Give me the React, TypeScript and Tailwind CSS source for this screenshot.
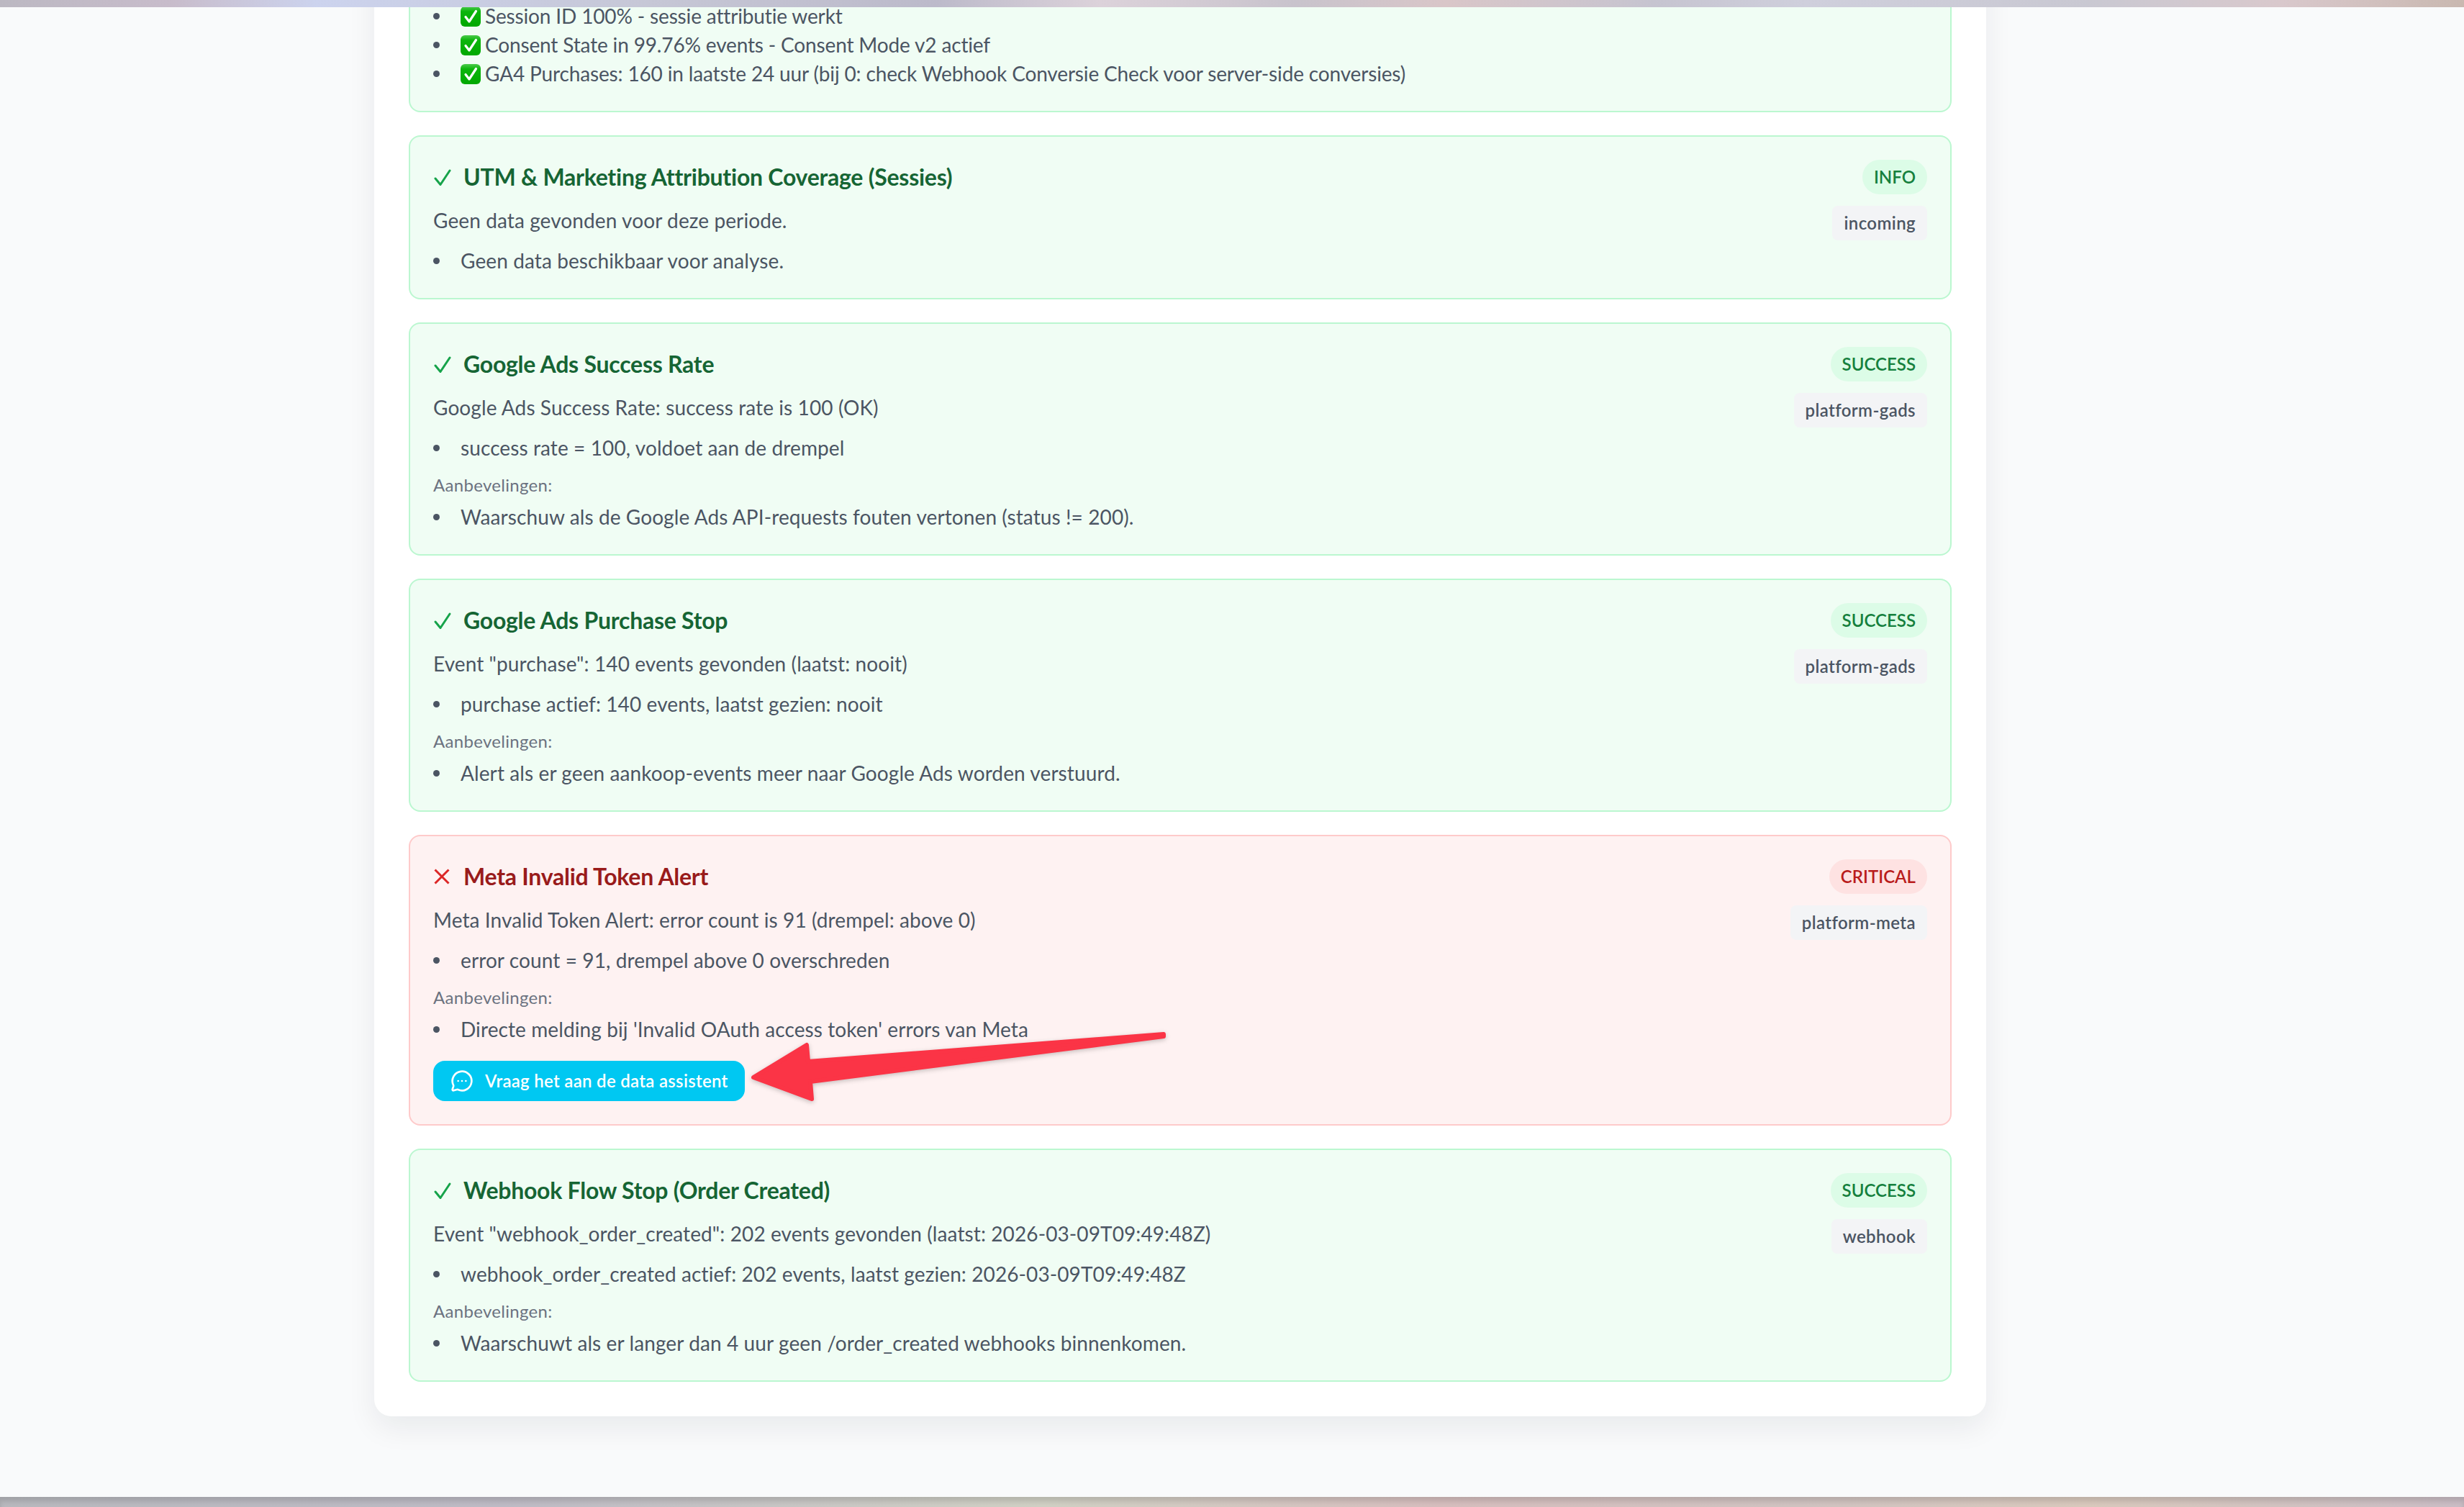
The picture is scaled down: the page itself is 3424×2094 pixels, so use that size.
import type { ReactNode } from 'react';
import { MessageCircleMore } from 'lucide-react';

type Tone = 'green' | 'red';

interface Alert {
  tone: Tone;
  title: string;
  summary: string;
  details: string[];
  badge: string;
  tag: string;
  advice?: string;
  ask?: boolean;
}

const alerts: Alert[] = [
  {
    tone: 'green',
    title: 'UTM & Marketing Attribution Coverage (Sessies)',
    summary: 'Geen data gevonden voor deze periode.',
    details: ['Geen data beschikbaar voor analyse.'],
    badge: 'INFO',
    tag: 'incoming',
  },
  {
    tone: 'green',
    title: 'Google Ads Success Rate',
    summary: 'Google Ads Success Rate: success rate is 100 (OK)',
    details: ['success rate = 100, voldoet aan de drempel'],
    badge: 'SUCCESS',
    tag: 'platform-gads',
    advice: 'Waarschuw als de Google Ads API-requests fouten vertonen (status != 200).',
  },
  {
    tone: 'green',
    title: 'Google Ads Purchase Stop',
    summary: 'Event "purchase": 140 events gevonden (laatst: nooit)',
    details: ['purchase actief: 140 events, laatst gezien: nooit'],
    badge: 'SUCCESS',
    tag: 'platform-gads',
    advice: 'Alert als er geen aankoop-events meer naar Google Ads worden verstuurd.',
  },
  {
    tone: 'red',
    title: 'Meta Invalid Token Alert',
    summary: 'Meta Invalid Token Alert: error count is 91 (drempel: above 0)',
    details: ['error count = 91, drempel above 0 overschreden'],
    badge: 'CRITICAL',
    tag: 'platform-meta',
    advice: "Directe melding bij 'Invalid OAuth access token' errors van Meta",
    ask: true,
  },
  {
    tone: 'green',
    title: 'Webhook Flow Stop (Order Created)',
    summary: 'Event "webhook_order_created": 202 events gevonden (laatst: 2026-03-09T09:49:48Z)',
    details: ['webhook_order_created actief: 202 events, laatst gezien: 2026-03-09T09:49:48Z'],
    badge: 'SUCCESS',
    tag: 'webhook',
    advice: 'Waarschuwt als er langer dan 4 uur geen /order_created webhooks binnenkomen.',
  },
];

const checks = [
  'Session ID 100% - sessie attributie werkt',
  'Consent State in 99.76% events - Consent Mode v2 actief',
  'GA4 Purchases: 160 in laatste 24 uur (bij 0: check Webhook Conversie Check voor server-side conversies)',
];

function CheckEmoji() {
  return (
    <svg viewBox="0 0 28 28" className="mr-[6px] inline-block h-[28px] w-[28px] align-[-4px]">
      <defs>
        <linearGradient id="emoji-green" x1="0" y1="0" x2="0" y2="1">
          <stop offset="0" stopColor="#4ccb4c" />
          <stop offset="0.25" stopColor="#0cb50c" />
          <stop offset="1" stopColor="#00a800" />
        </linearGradient>
      </defs>
      <rect width="28" height="28" rx="6" fill="url(#emoji-green)" />
      <path d="M7 14.5 L12 21 L21.5 6.5" fill="none" stroke="#fff" strokeWidth="3.2" strokeLinecap="round" strokeLinejoin="round" />
    </svg>
  );
}

function ToneIcon({ tone }: { tone: Tone }) {
  if (tone === 'red') {
    return (
      <svg viewBox="0 0 28 28" className="h-[28px] w-[28px] shrink-0">
        <path d="M2.5 4.5 L21.5 23.5 M21.5 4.5 L2.5 23.5" fill="none" stroke="#dc2626" strokeWidth="3" />
      </svg>
    );
  }
  return (
    <svg viewBox="0 0 28 28" className="h-[28px] w-[28px] shrink-0">
      <path d="M3 16 L10 24.5 L23 5" fill="none" stroke="#16a34a" strokeWidth="3" strokeLinecap="round" strokeLinejoin="round" />
    </svg>
  );
}

function Arrow() {
  return (
    <svg
      viewBox="1030 1425 600 115"
      className="absolute left-[460px] top-[263px] h-[115px] w-[600px] drop-shadow-[0_2px_3px_rgba(0,0,0,0.22)]"
    >
      <path
        d="M1047 1497 L1121 1452 L1123 1475 L1617 1437 L1617 1440 L1126 1503 L1128 1527 Z"
        fill="#fb3446"
        stroke="#fb3446"
        strokeWidth="6"
        strokeLinejoin="round"
      />
    </svg>
  );
}

function Item({ children }: { children: ReactNode }) {
  return (
    <li className="flex">
      <span className="flex h-[40px] w-[38px] shrink-0 items-center">
        <span className="h-[9px] w-[9px] rounded-full bg-[#4b5563]" />
      </span>
      <span>{children}</span>
    </li>
  );
}

function AlertCard({ alert }: { alert: Alert }) {
  const red = alert.tone === 'red';
  return (
    <div
      className={`relative flex justify-between rounded-[16px] border-2 p-[32px] ${
        red ? 'border-[#fecaca] bg-[#fef2f2]' : 'border-[#bbf7d0] bg-[#f0fdf4]'
      }`}
    >
      <div className="min-w-0 flex-1">
        <div className="flex h-[48px] items-center gap-[14px]">
          <ToneIcon tone={alert.tone} />
          <h3 className={`text-[32px] font-bold tracking-[-0.25px] ${red ? 'text-[#991b1b]' : 'text-[#166534]'}`}>
            {alert.title}
          </h3>
        </div>
        <p className="mt-4 text-[28px] leading-[40px] tracking-[0.1px] text-[#4b5563]">{alert.summary}</p>
        <ul className="mt-4 text-[28px] leading-[40px] tracking-[0.1px] text-[#4b5563]">
          {alert.details.map((d) => (
            <Item key={d}>{d}</Item>
          ))}
        </ul>
        {alert.advice && (
          <>
            <p className="mt-4 text-[24px] leading-[32px] tracking-[0.3px] text-[#6b7280]">Aanbevelingen:</p>
            <ul className="mt-2 text-[28px] leading-[40px] tracking-[0.1px] text-[#4b5563]">
              <Item>{alert.advice}</Item>
            </ul>
          </>
        )}
        {alert.ask && (
          <button className="mt-6 flex h-[56px] w-[433px] items-center gap-4 rounded-[16px] bg-[#00c8f2] px-6 text-[24px] font-semibold tracking-[0.3px] whitespace-nowrap text-white">
            <MessageCircleMore size={32} strokeWidth={2} className="shrink-0" />
            Vraag het aan de data assistent
          </button>
        )}
      </div>
      <div className="flex shrink-0 flex-col items-end gap-4">
        <span
          className={`flex h-[48px] items-center rounded-full px-4 text-[24px] font-semibold ${
            red ? 'bg-[#fee2e2] text-[#b91c1c]' : 'bg-[#dcfce7] text-[#15803d]'
          }`}
        >
          {alert.badge}
        </span>
        <span className="flex h-[48px] items-center rounded-[8px] bg-[#f3f4f6] px-4 text-[24px] font-semibold tracking-[0.4px] text-[#4b5563]">
          {alert.tag}
        </span>
      </div>
      {alert.ask && <Arrow />}
    </div>
  );
}

export default function App() {
  return (
    <div className="flex h-[2094px] w-[3424px] flex-col overflow-hidden bg-[#f9fafb] font-[Lato,sans-serif]">
      <div className="h-[10px] shrink-0 bg-[linear-gradient(90deg,#bcb8c2_0px,#c8bccb_240px,#ccd3ee_440px,#c6c7d6_900px,#bcbaca_1300px,#dcd2da_1530px,#c8c3cc_1800px,#d9c6c8_2010px,#c6c4d0_2300px,#cfcfdc_2510px,#c9c8d2_2900px,#d9c8cc_3170px,#c9b8b0_3424px)]" />
      <div className="flex min-h-0 flex-1 flex-col items-center justify-end overflow-hidden pr-[144px] pb-[112px]">
        <main className="flex w-[2240px] shrink-0 flex-col gap-[32px] rounded-[24px] bg-white p-[48px] shadow-[0_16px_40px_rgba(17,24,39,0.07)]">
          <div className="rounded-[16px] border-2 border-[#bbf7d0] bg-[#f0fdf4] p-[32px]">
            <ul className="text-[28px] leading-[40px] tracking-[-0.15px] text-[#4b5563]">
              {checks.map((c) => (
                <Item key={c}>
                  <CheckEmoji />
                  {c}
                </Item>
              ))}
            </ul>
          </div>
          {alerts.map((a) => (
            <AlertCard key={a.title} alert={a} />
          ))}
        </main>
      </div>
      <div className="h-[14px] shrink-0 bg-[linear-gradient(90deg,#b7b8bd_0px,#bdbac4_700px,#cfcfc3_1450px,#d5bdbd_2000px,#cfc2c0_2500px,#d8c8bc_2900px,#c9bcc4_3424px)] shadow-[inset_0_6px_6px_rgba(0,0,0,0.12)]" />
    </div>
  );
}
